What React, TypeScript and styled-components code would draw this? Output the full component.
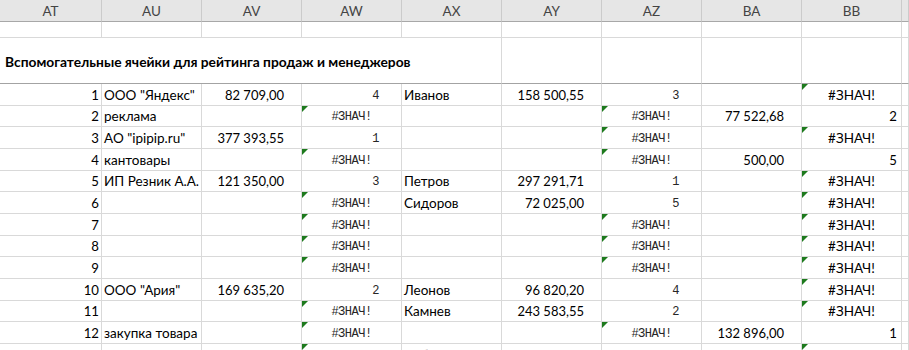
import React from 'react';
import styled, { createGlobalStyle, css } from 'styled-components';

const COLS = '102px repeat(8, 100px) 1fr';

const GlobalStyle = createGlobalStyle`
  html, body {
    margin: 0;
    padding: 0;
    background: #fff;
    overflow: hidden;
  }
  body {
    font-family: Lato, "Open Sans", sans-serif;
    color: #000;
  }
`;

const Sheet = styled.div`
  width: 909px;
  height: 350px;
  display: flex;
  flex-direction: column;
  overflow: hidden;
`;

const HeaderRow = styled.div`
  display: grid;
  grid-template-columns: ${COLS};
  height: 22px;
  flex: none;
  background: #e6e6e6;
`;

const HeaderCell = styled.div`
  display: flex;
  align-items: center;
  justify-content: center;
  border-right: 1px solid #cbcbcb;
  border-bottom: 1px solid #a8a8a8;
  font-size: 13.5px;
  color: #444;
`;

const Row = styled.div<{ $h: number }>`
  display: grid;
  grid-template-columns: ${COLS};
  height: ${p => p.$h}px;
  flex: none;
`;

type Kind = 'idx' | 'text' | 'money' | 'mono' | 'monoNum' | 'err' | 'num' | 'blank';

const monoFont = css`
  font-family: "Liberation Mono", "DejaVu Sans Mono", monospace;
  font-size: 12px;
  letter-spacing: -0.5px;
  color: #262626;
  padding-top: 2px;
`;

const Cell = styled.div<{ $kind: Kind; $tri?: boolean; $dark?: boolean }>`
  position: relative;
  display: flex;
  align-items: center;
  border-right: 1px solid #d9d9d9;
  border-bottom: 1px solid ${p => (p.$dark ? '#a3a3a3' : '#d9d9d9')};
  font-size: 13.5px;
  white-space: nowrap;
  overflow: hidden;
  ${p => {
    switch (p.$kind) {
      case 'idx':
        return css`justify-content: flex-end; padding-right: 2px; font-size: 13.2px;`;
      case 'text':
        return css`justify-content: flex-start; padding-left: 2px; overflow: visible;`;
      case 'money':
        return css`justify-content: flex-end; padding-right: 17px; font-size: 13px;`;
      case 'mono':
        return css`justify-content: center; ${monoFont}`;
      case 'monoNum':
        return css`justify-content: flex-end; padding-right: 22px; ${monoFont}`;
      case 'err':
        return css`justify-content: center;`;
      case 'num':
        return css`justify-content: flex-end; padding-right: 4px; font-size: 13.2px;`;
      default:
        return '';
    }
  }}
  ${p =>
    p.$tri &&
    css`
      &::before {
        content: '';
        position: absolute;
        top: 0;
        left: 0;
        border-top: 6px solid #1d7a1d;
        border-right: 6px solid transparent;
      }
    `}
`;

const TitleCell = styled.div`
  grid-column: span 5;
  display: flex;
  align-items: center;
  padding-left: 5px;
  padding-top: 1px;
  border-right: 1px solid #d9d9d9;
  border-bottom: 1px solid #a3a3a3;
  font-size: 13.8px;
  font-weight: 700;
  white-space: nowrap;
`;

const letters = ['AT', 'AU', 'AV', 'AW', 'AX', 'AY', 'AZ', 'BA', 'BB', ''];

// AT AU AV AW AX AY AZ BA BB
const E = '#ЗНАЧ!';

type RowData = [string, string, string, string, string, string, string, string, string];

const rows: RowData[] = [
  ['1', 'ООО "Яндекс"', '82 709,00', '4', 'Иванов', '158 500,55', '3', '', E],
  ['2', 'реклама', '', E, '', '', E, '77 522,68', '2'],
  ['3', 'АО "ipipip.ru"', '377 393,55', '1', '', '', E, '', E],
  ['4', 'кантовары', '', E, '', '', E, '500,00', '5'],
  ['5', 'ИП Резник А.А.', '121 350,00', '3', 'Петров', '297 291,71', '1', '', E],
  ['6', '', '', E, 'Сидоров', '72 025,00', '5', '', E],
  ['7', '', '', E, '', '', E, '', E],
  ['8', '', '', E, '', '', E, '', E],
  ['9', '', '', E, '', '', E, '', E],
  ['10', 'ООО "Ария"', '169 635,20', '2', 'Леонов', '96 820,20', '4', '', E],
  ['11', '', '', E, 'Камнев', '243 583,55', '2', '', E],
  ['12', 'закупка товара', '', E, '', '', E, '132 896,00', '1'],
  ['13', '', '', E, 'Лебедев', '48 180,00', '6', '', E],
];

const heights = [22, 21, 22, 22, 21, 22, 22, 21, 22, 22, 21, 22, 22];

function kindFor(col: number, v: string): Kind {
  if (!v) return 'blank';
  switch (col) {
    case 0:
      return 'idx';
    case 1:
    case 4:
      return 'text';
    case 2:
    case 5:
    case 7:
      return 'money';
    case 3:
    case 6:
      return v === E ? 'mono' : 'monoNum';
    case 8:
      return v === E ? 'err' : 'num';
    default:
      return 'blank';
  }
}

export default function App() {
  return (
    <Sheet>
      <GlobalStyle />
      <HeaderRow>
        {letters.map((l, i) => (
          <HeaderCell key={i}>{l}</HeaderCell>
        ))}
      </HeaderRow>

      <Row $h={16}>
        {letters.map((_, i) => (
          <Cell key={i} $kind="blank" />
        ))}
      </Row>

      <Row $h={46}>
        <TitleCell>Вспомогательные ячейки для рейтинга продаж и менеджеров</TitleCell>
        {[5, 6, 7, 8, 9].map(i => (
          <Cell key={i} $kind="blank" $dark />
        ))}
      </Row>

      {rows.map((r, ri) => (
        <Row key={ri} $h={heights[ri]}>
          {r.map((v, ci) => (
            <Cell key={ci} $kind={kindFor(ci, v)} $tri={v === E}>
              {v}
            </Cell>
          ))}
          <Cell $kind="blank" />
        </Row>
      ))}
    </Sheet>
  );
}
